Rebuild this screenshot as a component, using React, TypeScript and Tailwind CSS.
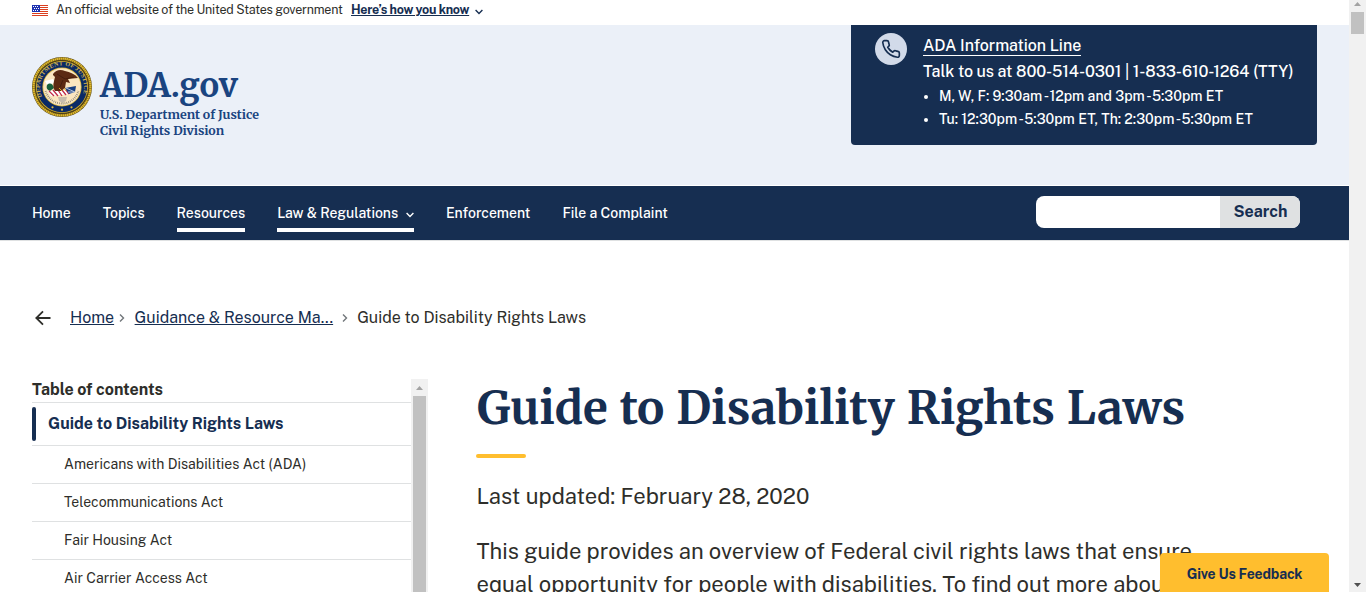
import type { ReactNode } from "react";

const sans = "font-['Public_Sans','Noto_Sans',sans-serif]";
const serif = "font-['Merriweather','Noto_Serif','DejaVu_Serif',serif]";

function Flag() {
  return (
    <svg width="16" height="11" viewBox="0 0 16 11" shapeRendering="crispEdges" aria-hidden="true">
      <rect width="16" height="11" fill="#fff" />
      {[0, 2, 4, 6, 8, 10].map((y) => (
        <rect key={y} y={y} width="16" height="1" fill="#db3e1f" />
      ))}
      <rect width="8" height="7" fill="#1e33b1" />
      {[[1, 1], [3, 1], [5, 1], [2, 3], [4, 3], [6, 3], [1, 5], [3, 5], [5, 5]].map(([x, y]) => (
        <rect key={`${x}-${y}`} x={x} y={y} width="1" height="1" fill="#fff" />
      ))}
    </svg>
  );
}

function Seal() {
  return (
    <svg width="60" height="60" viewBox="0 0 60 60" aria-hidden="true">
      <defs>
        <path id="ring" d="M10.5 40.5A22 22 0 1 1 49.5 40.5" />
      </defs>
      <circle cx="30" cy="30" r="30" fill="#5b4a17" />
      <circle cx="30" cy="30" r="28.4" fill="none" stroke="#e0b92c" strokeWidth="2.2" strokeDasharray="1.6 0.4" />
      <circle cx="30" cy="30" r="26.6" fill="#3a3216" />
      <circle cx="30" cy="30" r="26" fill="#d4ad2a" />
      <circle cx="30" cy="30" r="25.2" fill="#0a2a66" />
      <circle cx="30" cy="30" r="19.6" fill="#d6b23a" />
      <circle cx="30" cy="30" r="18.8" fill="#fbe6c0" />
      <text fill="#d0b252" className="font-['Liberation_Serif',serif] text-[6px] font-bold">
        <textPath href="#ring" textLength="85" startOffset="1">DEPARTMENT OF JUSTICE</textPath>
      </text>
      <path d="M13 24l8-2 2 4-8 2z" fill="#fff" />
      <path d="M15 28c3-3 6-1 7 3l-4 3c-3-1-4-3-3-6z" fill="#17603b" />
      <path d="M16 34l20-1 3 4-20 2z" fill="#fff" />
      <path d="M17 34l5 5M21 33l5 6M26 33l4 6M30 33l4 5M34 33l3 4" stroke="#c32a48" strokeWidth="1.3" />
      <path d="M33 31l11-2-1 6-6 2z" fill="#173f82" />
      <path d="M34 31l9 4M36 35l6 0" stroke="#dfe5f3" strokeWidth=".8" />
      <path d="M21 17c3-4 7-5 12-3 5 1 10 3 13 7-4 0-7 1-10 1l2 4-4-1-1 6-4 3-6 0c-2-3-2-6-1-10l1-4-2-2z" fill="#5c2a13" />
      <path d="M25 17l8 5 9-2M31 23l-3 7" stroke="#3f1b0c" strokeWidth=".8" fill="none" />
      <path d="M27 31l3 3M32 31l2 3" stroke="#d9a62c" strokeWidth="1" />
      <path d="M26 40h9l-1 4-3.500 2-3.500-2z" fill="#c9bdad" />
      <path d="M13.600 34a17 17 0 0 0 32.800 0" fill="none" stroke="#8d8777" strokeWidth="2" strokeDasharray=".8 1.1" />
      <g fill="#e2bb3b">
        <circle cx="20.5" cy="50.3" r="1.1" />
        <circle cx="30" cy="52.7" r="1.1" />
        <circle cx="39.5" cy="50.3" r="1.1" />
      </g>
    </svg>
  );
}

function Chevron({ className }: { className?: string }) {
  return (
    <svg width="8" height="6" viewBox="0 0 8 6" fill="none" stroke="currentColor" strokeWidth="1.4" className={className} aria-hidden="true">
      <path d="M.6 1L4 4.400 7.400 1" />
    </svg>
  );
}

function Separator({ className }: { className: string }) {
  return (
    <svg width="6" height="8" viewBox="0 0 6 8" fill="none" stroke="#71767a" strokeWidth="1.4" className={className} aria-hidden="true">
      <path d="M1 .5L4.500 4 1 7.500" />
    </svg>
  );
}

function NavItem({ children, active = false }: { children: ReactNode; active?: boolean }) {
  return (
    <a className={`flex h-[38px] items-center border-b-4 pt-1 ${active ? "border-white" : "border-transparent"}`}>
      {children}
    </a>
  );
}

const tocItems = [
  "Americans with Disabilities Act (ADA)",
  "Telecommunications Act",
  "Fair Housing Act",
  "Air Carrier Access Act",
];

export default function App() {
  return (
    <div className={`relative flex h-[592px] w-[1366px] overflow-hidden bg-white text-[#2e2e2a] ${sans}`}>
      <div className="flex h-full w-[1349px] flex-col overflow-hidden">
        <div className="flex h-[25px] shrink-0 items-center pb-[5px] pl-8 text-[12.5px]">
          <Flag />
          <span className="ml-2 tracking-[-0.235px] whitespace-nowrap">An official website of the United States government</span>
          <a className="ml-[8.5px] font-bold tracking-[-0.26px] whitespace-nowrap text-[#162e51] underline">Here’s how you know</a>
          <Chevron className="mt-[3px] ml-1.5 text-[#162e51]" />
        </div>

        <header className="flex h-40 shrink-0 justify-between bg-[#ebf0f8] pr-8 pl-8">
          <div className="flex pt-8">
            <Seal />
            <div className={`ml-2 font-bold text-[#1a4480] ${serif}`}>
              <div className="mt-2 text-[32.8px] leading-[42px] whitespace-nowrap">ADA.gov</div>
              <div className="text-[12.4px] leading-4 whitespace-nowrap">
                U.S. Department of Justice
                <br />
                <span className="tracking-[-0.04px]">Civil Rights Division</span>
              </div>
            </div>
          </div>
          <div className="flex h-[120px] w-[466px] rounded-b bg-[#162e51] pt-2 pl-6 text-white">
            <div className="flex size-8 items-center justify-center rounded-full bg-[#d2dae9]">
              <svg width="20" height="20" viewBox="0 0 24 24" fill="none" stroke="#162e51" strokeWidth="2" strokeLinejoin="round" aria-hidden="true">
                <path d="M22 16.92v3a2 2 0 0 1-2.18 2 19.79 19.79 0 0 1-8.63-3.07 19.5 19.5 0 0 1-6-6 19.79 19.79 0 0 1-3.07-8.67A2 2 0 0 1 4.11 2h3a2 2 0 0 1 2 1.72c.127.96.361 1.903.7 2.81a2 2 0 0 1-.45 2.11L8.09 9.91a16 16 0 0 0 6 6l1.27-1.27a2 2 0 0 1 2.11-.45c.907.339 1.85.573 2.81.7A2 2 0 0 1 22 16.92z" />
              </svg>
            </div>
            <div className="ml-4 flex flex-col items-start font-medium whitespace-nowrap">
              <a className="mt-0.5 h-[21px] border-b border-white text-base leading-[21px] tracking-[-0.075px]">ADA Information Line</a>
              <span className="mt-1 text-base leading-6 tracking-[-0.08px]">Talk to us at 800-514-0301 | 1-833-610-1264 (TTY)</span>
              <ul className="mt-px list-disc pl-4 text-sm leading-[23px]">
                <li>M, W, F: 9:30am<span className="mr-[0.4px] ml-[1.4px]">-</span>12pm and 3pm<span className="mr-[0.4px] ml-[1.4px]">-</span>5:30pm ET</li>
                <li>Tu: 12:30pm<span className="mr-[0.4px] ml-[1.4px]">-</span>5:30pm ET, Th: 2:30pm<span className="mr-[0.4px] ml-[1.4px]">-</span>5:30pm ET</li>
              </ul>
            </div>
          </div>
        </header>

        <nav className="mt-px flex h-[55px] shrink-0 justify-between border-b border-[#dfe1e2] bg-[#162e51] pr-[49px] pl-8 text-white">
          <div className="flex gap-8 pt-2 text-sm font-medium tracking-[-0.02px] whitespace-nowrap">
            <NavItem>Home</NavItem>
            <NavItem>Topics</NavItem>
            <NavItem active>Resources</NavItem>
            <NavItem active>
              Law &amp; Regulations
              <Chevron className="mt-1 ml-2" />
            </NavItem>
            <NavItem>Enforcement</NavItem>
            <NavItem>File a Complaint</NavItem>
          </div>
          <div className="mt-2.5 flex h-8 w-[264px] overflow-hidden rounded-lg bg-white">
            <div className="w-[184px]" />
            <button className="w-20 bg-[#dfe1e2] pl-px text-base leading-8 font-bold text-[#162e51]">Search</button>
          </div>
        </nav>

        <div className="mt-16 flex h-[26px] shrink-0 items-center pl-[35px] text-base whitespace-nowrap">
          <svg width="16" height="16" viewBox="0 0 16 16" fill="none" stroke="#2e2e2a" strokeWidth="1.8" aria-hidden="true">
            <path d="M15.5 8H1.5M8 1.3L1.3 8 8 14.7" />
          </svg>
          <a className="ml-[19px] text-[#162e51] underline">Home</a>
          <Separator className="ml-[5px]" />
          <a className="ml-[9.5px] text-[#162e51] underline">Guidance &amp; Resource Ma...</a>
          <Separator className="ml-[9px]" />
          <span className="ml-[9px]">Guide to Disability Rights Laws</span>
        </div>

        <main className="mt-12 flex min-h-0 flex-1 pl-8">
          <aside className="flex h-full w-[396px] shrink-0">
            <div className="w-[379px]">
              <div className="h-[23px] text-base leading-[21px] font-bold">Table of contents</div>
              <div className="flex h-[43px] items-center border-t border-[#dfe1e2]">
                <span className="h-[34px] w-1 rounded-sm bg-[#162e51]" />
                <span className="ml-3 font-bold text-[#162e51]">Guide to Disability Rights Laws</span>
              </div>
              {tocItems.map((item) => (
                <div key={item} className="h-[38px] border-t border-[#dfe1e2] pl-8 text-sm leading-9">
                  {item}
                </div>
              ))}
            </div>
            <div className="flex w-[17px] flex-col items-center bg-[#f1f1f1]">
              <svg width="7" height="4" viewBox="0 0 7 4" className="mt-[7px] shrink-0" aria-hidden="true">
                <path d="M0 4L3.5 0 7 4z" fill="#a3a3a3" />
              </svg>
              <div className="mt-1.5 w-[13px] flex-1 bg-[#c1c1c1]" />
            </div>
          </aside>
          <article className="ml-12 w-[730px] shrink-0">
            <h1 className={`pl-px text-[45.7px] leading-[58px] font-bold whitespace-nowrap text-[#162e51] [word-spacing:1.1px] ${serif}`}>
              Guide to Disability Rights Laws
            </h1>
            <div className="mt-[17px] h-1 w-[50px] rounded-sm bg-[#ffbe2e]" />
            <p className="mt-[22px] pl-[0.5px] text-[22px] leading-[33px]">Last updated: February 28, 2020</p>
            <p className="mt-[22px] pl-[0.5px] text-[22px] leading-[33px]">
              This guide provides an overview of Federal civil rights laws that ensure equal opportunity for people with disabilities. To find out more about
            </p>
          </article>
        </main>
      </div>

      <div className="flex w-[17px] flex-col items-center bg-[#f1f1f1]">
        <svg width="7" height="4" viewBox="0 0 7 4" className="mt-0.5 shrink-0" aria-hidden="true">
          <path d="M0 4L3.5 0 7 4z" fill="#a3a3a3" />
        </svg>
        <div className="mt-1.5 h-[22px] w-[13px] bg-[#c1c1c1]" />
        <svg width="7" height="4" viewBox="0 0 7 4" className="mt-auto mb-[5px] shrink-0" aria-hidden="true">
          <path d="M0 0L3.5 4 7 0z" fill="#505050" />
        </svg>
      </div>

      <button className="absolute right-[37px] bottom-0 h-[39px] w-[169px] rounded-t bg-[#ffbe2e] pt-0.5 text-sm font-bold tracking-[-0.17px] text-[#162e51]">
        Give Us Feedback
      </button>
    </div>
  );
}
